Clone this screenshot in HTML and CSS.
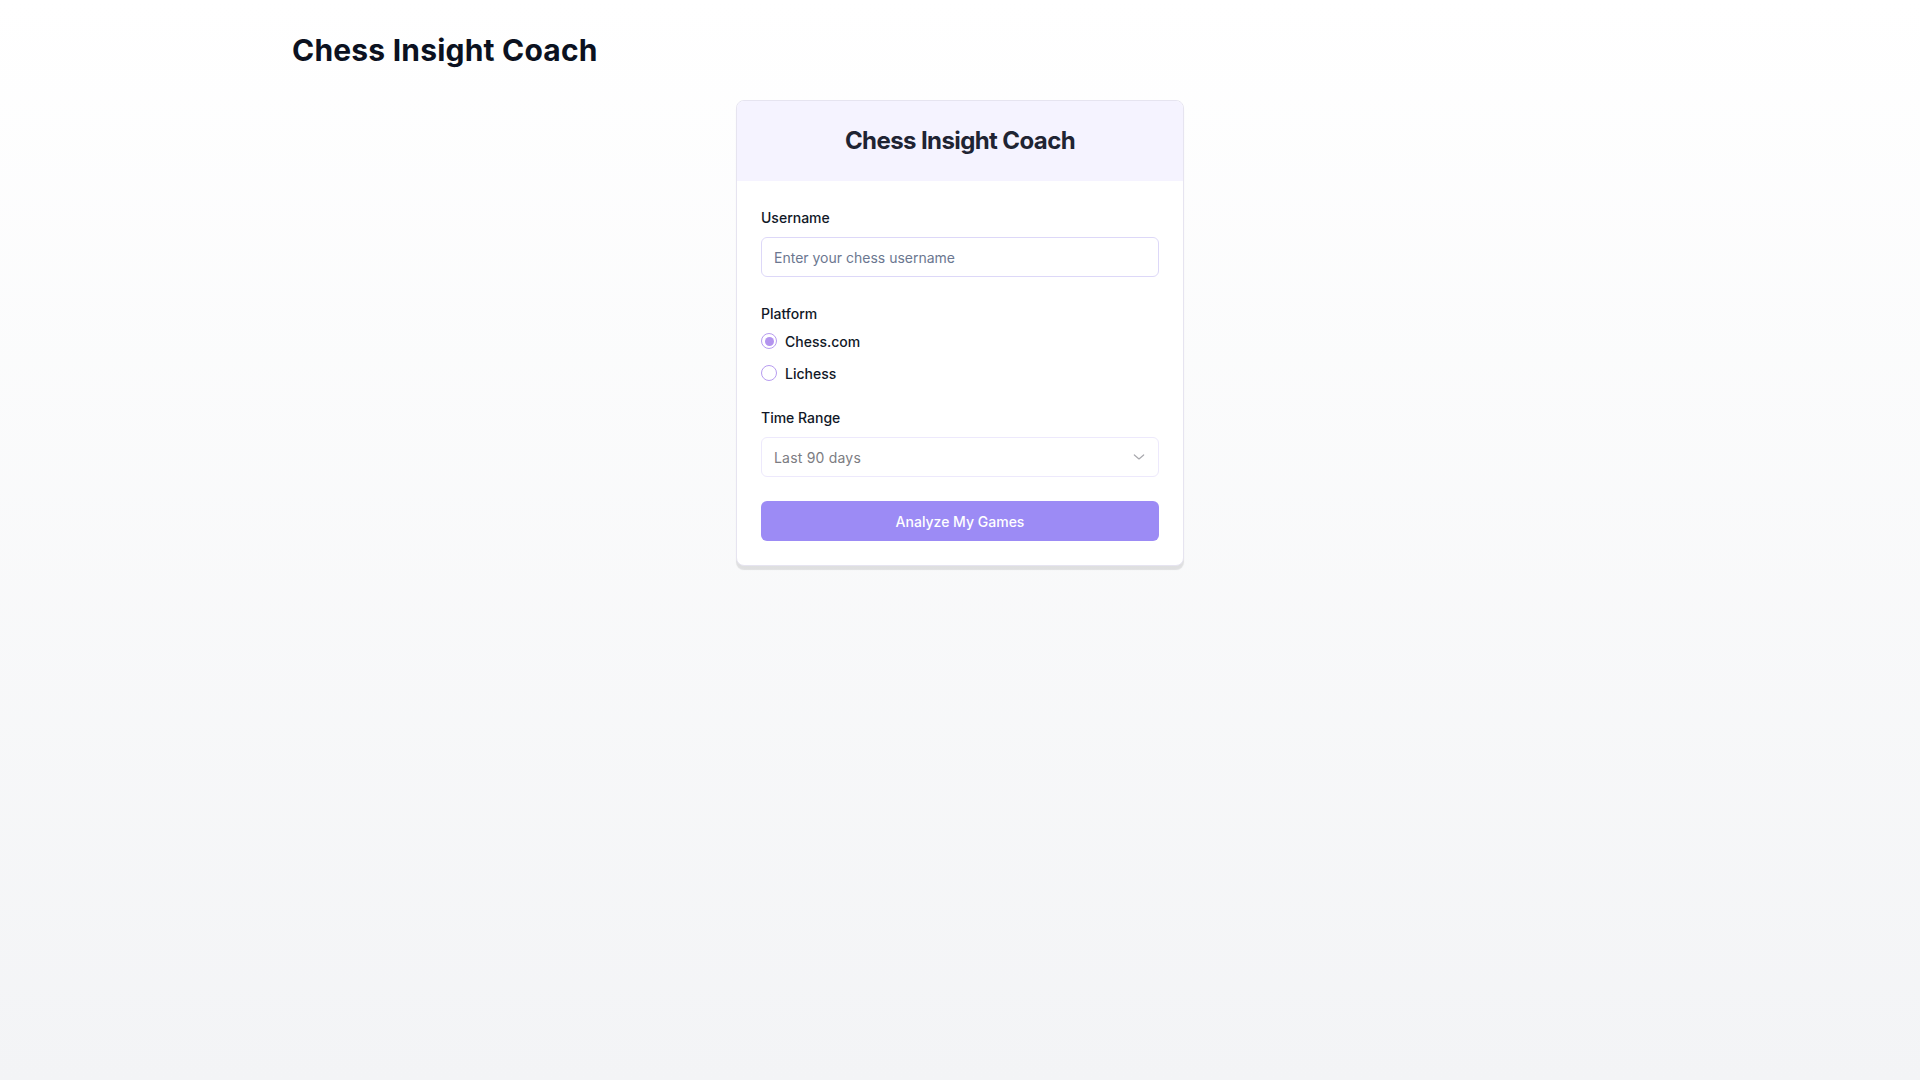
FILE: index.html
```html
<!DOCTYPE html>
<html lang="en">
<head>
<meta charset="utf-8">
<title>Chess Insight Coach</title>
<link rel="stylesheet" href="styles.css">
</head>
<body>
<div class="container">
  <h1 class="page-title">Chess Insight Coach</h1>
  <div class="card">
    <div class="card-header">
      <h2 class="card-title">Chess Insight Coach</h2>
    </div>
    <form class="card-body">
      <div class="field field-user">
        <label class="label" for="username">Username</label>
        <input class="input" id="username" type="text" placeholder="Enter your chess username">
      </div>
      <div class="field field-platform">
        <div class="label">Platform</div>
        <div class="radio-group">
          <label class="radio-row"><input class="radio" type="radio" name="platform" checked><span>Chess.com</span></label>
          <label class="radio-row"><input class="radio" type="radio" name="platform"><span>Lichess</span></label>
        </div>
      </div>
      <div class="field field-range">
        <label class="label" for="range">Time Range</label>
        <div class="select-wrap">
          <select class="select" id="range">
            <option>Last 90 days</option>
            <option>Last 30 days</option>
            <option>Last 7 days</option>
          </select>
          <svg class="chevron" width="16" height="16" viewBox="0 0 24 24" fill="none" stroke="currentColor" stroke-width="1.8" stroke-linecap="round" stroke-linejoin="round"><path d="m5 9 7 6 7-6"/></svg>
        </div>
      </div>
      <button class="button" type="button">Analyze My Games</button>
    </form>
  </div>
</div>
</body>
</html>
```
FILE: styles.css
```css
* { box-sizing: border-box; }
html, body { height: 100%; }
body {
  margin: 0;
  font-family: Inter, "Noto Sans", sans-serif;
  color: #111827;
  background: linear-gradient(180deg, #ffffff 0%, #f3f4f6 100%);
  min-height: 1080px;
}
.container {
  max-width: 1400px;
  margin: 0 auto;
  padding: 32px 32px;
}
.page-title {
  margin: 0 0 32px;
  font-size: 30px;
  line-height: 36px;
  font-weight: 700;
  color: #0b1120;
  letter-spacing: 0.2px;
}
.card {
  width: 448px;
  margin: 0 auto;
  background: #fff;
  border: 1px solid #e6e4f0;
  border-radius: 8px;
  overflow: hidden;
  box-shadow: 0 4px 1px rgba(0,0,0,0.1);
}
.card-header {
  background: #f5f3ff;
  padding: 24px;
  text-align: center;
}
.card-title {
  margin: 0;
  font-size: 24px;
  line-height: 32px;
  font-weight: 700;
  color: #1f2433;
  letter-spacing: -0.6px;
}
.card-body {
  padding: 27px 24px 24px;
  display: flex;
  flex-direction: column;
}
.field { display: flex; flex-direction: column; }
.field-user { margin-bottom: 27px; }
.field-platform { margin-bottom: 25px; }
.field-range { margin-bottom: 24px; }
.label {
  font-size: 14px;
  line-height: 20px;
  font-weight: 500;
  color: #111827;
  margin-bottom: 9px;
}
.field-platform .label { margin-bottom: 7px; }
.field-range .label { margin-bottom: 9px; }
.input, .select {
  width: 100%;
  height: 40px;
  border: 1px solid #ddd8f8;
  border-radius: 6px;
  padding: 0 12px;
  font-family: inherit;
  font-size: 14px;
  color: #111827;
  background: #fff;
  outline: none;
}
.input::placeholder { color: #6b7790; }
.select-wrap { position: relative; }
.select {
  appearance: none;
  -webkit-appearance: none;
  border-color: #ede9fc;
  color: #7c7c82;
  letter-spacing: 0.2px;
}
.chevron {
  position: absolute;
  right: 12px;
  top: 12px;
  color: #a8a8ad;
  pointer-events: none;
}
.radio-group { display: flex; flex-direction: column; gap: 12px; }
.radio-row {
  display: flex;
  align-items: center;
  height: 20px;
  font-size: 14px;
  font-weight: 500;
  color: #111827;
  cursor: pointer;
}
.radio {
  appearance: none;
  -webkit-appearance: none;
  width: 16px;
  height: 16px;
  margin: 0 8px 0 0;
  border: 1px solid #b79cf0;
  border-radius: 50%;
  background: #fff;
  display: grid;
  place-content: center;
}
.radio:checked::before {
  content: "";
  width: 9px;
  height: 9px;
  border-radius: 50%;
  background: #b394ee;
}
.button {
  height: 40px;
  width: 100%;
  border: none;
  border-radius: 6px;
  background: #9c8bf5;
  color: #ffffff;
  font-family: inherit;
  font-size: 14px;
  font-weight: 500;
}
```
